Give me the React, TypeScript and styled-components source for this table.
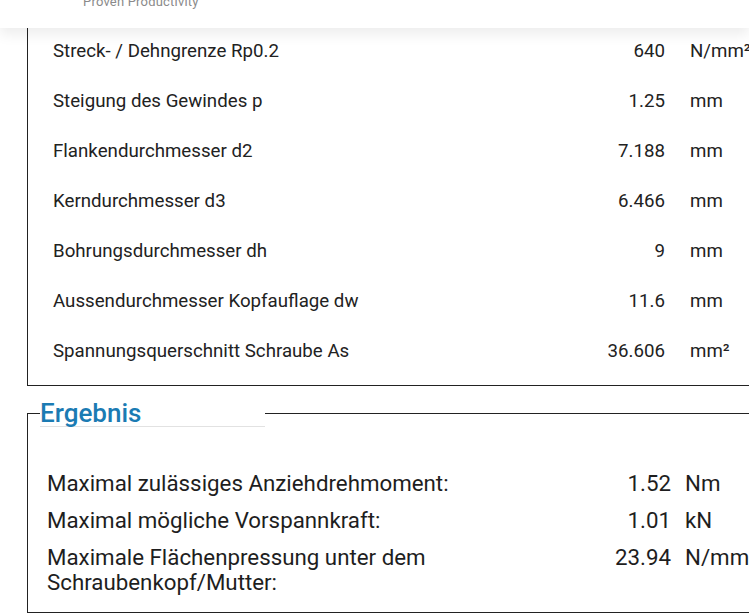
import styled, { createGlobalStyle } from 'styled-components';

const GlobalStyle = createGlobalStyle`
  html, body {
    margin: 0;
    padding: 0;
    background: #fff;
    overflow: hidden;
  }
  body {
    font-family: Roboto, "Liberation Sans", sans-serif;
    color: #222;
  }
`;

const StyledHeader = styled.header`
  position: relative;
  z-index: 1;
  height: 28px;
  overflow: hidden;
  display: flex;
  flex-direction: column;
  justify-content: flex-end;
  padding-left: 83px;
  background: #fff;
  box-shadow: 0 6px 14px rgba(0, 0, 0, 0.08);
`;

const StyledTagline = styled.div`
  font-size: 13px;
  line-height: 15px;
  color: #8a8a8a;
  margin-bottom: 19px;
  letter-spacing: 0.2px;
`;

const StyledMain = styled.main`
  padding-left: 27px;
  width: 760px;
`;

const StyledInputBox = styled.section`
  border-left: 1px solid #222;
  border-bottom: 1px solid #222;
  padding: 0 0 7px 25px;
`;

const StyledInputRow = styled.div`
  display: grid;
  grid-template-columns: 487px 100px auto;
  column-gap: 25px;
  align-items: center;
  align-content: start;
  height: 50px;
  padding-top: 13px;
  box-sizing: border-box;
  font-size: 18.7px;
  line-height: 20px;
  white-space: nowrap;
`;

const StyledValue = styled.span`
  text-align: right;
`;

const StyledUnit = styled.span`
  white-space: nowrap;
`;

const StyledResult = styled.fieldset`
  margin: 14px 0 0;
  padding: 44px 0 17px 12px;
  border: none;
  border-top: 1px solid #222;
  border-left: 1px solid #222;
  border-bottom: 1px solid #222;
  min-inline-size: 0;
`;

const StyledLegend = styled.legend`
  padding: 0;
  width: 225px;
  height: 27px;
  box-sizing: border-box;
  border-bottom: 1px solid #e2e2e2;
  background: #fff;
  color: #1b7bb3;
  font-size: 26px;
  line-height: 26px;
  font-weight: 500;
`;

const StyledResultList = styled.div`
  display: flex;
  flex-direction: column;
  gap: 12px;
  padding-left: 7px;
`;

const StyledResultRow = styled.div`
  display: grid;
  grid-template-columns: 420px 190px auto;
  column-gap: 14px;
  font-size: 22.3px;
  line-height: 25px;
  color: #1e1e1e;
`;

const StyledResultUnit = styled(StyledUnit)`
  overflow: hidden;
`;

type Row = { label: string; value: string; unit: string };

const inputs: Row[] = [
  { label: 'Streck- / Dehngrenze Rp0.2', value: '640', unit: 'N/mm²' },
  { label: 'Steigung des Gewindes p', value: '1.25', unit: 'mm' },
  { label: 'Flankendurchmesser d2', value: '7.188', unit: 'mm' },
  { label: 'Kerndurchmesser d3', value: '6.466', unit: 'mm' },
  { label: 'Bohrungsdurchmesser dh', value: '9', unit: 'mm' },
  { label: 'Aussendurchmesser Kopfauflage dw', value: '11.6', unit: 'mm' },
  { label: 'Spannungsquerschnitt Schraube As', value: '36.606', unit: 'mm²' },
];

const results: Row[] = [
  { label: 'Maximal zulässiges Anziehdrehmoment:', value: '1.52', unit: 'Nm' },
  { label: 'Maximal mögliche Vorspannkraft:', value: '1.01', unit: 'kN' },
  {
    label: 'Maximale Flächenpressung unter dem Schraubenkopf/Mutter:',
    value: '23.94',
    unit: 'N/mm²',
  },
];

const App = () => {
  return (
    <>
      <GlobalStyle />
      <StyledHeader>
        <StyledTagline>Proven Productivity</StyledTagline>
      </StyledHeader>

      <StyledMain>
        <StyledInputBox>
          {inputs.map((row) => (
            <StyledInputRow key={row.label}>
              <span>{row.label}</span>
              <StyledValue>{row.value}</StyledValue>
              <StyledUnit>{row.unit}</StyledUnit>
            </StyledInputRow>
          ))}
        </StyledInputBox>

        <StyledResult>
          <StyledLegend>Ergebnis</StyledLegend>
          <StyledResultList>
            {results.map((row) => (
              <StyledResultRow key={row.label}>
                <span>{row.label}</span>
                <StyledValue>{row.value}</StyledValue>
                <StyledResultUnit>{row.unit}</StyledResultUnit>
              </StyledResultRow>
            ))}
          </StyledResultList>
        </StyledResult>
      </StyledMain>
    </>
  );
};

export default App;
